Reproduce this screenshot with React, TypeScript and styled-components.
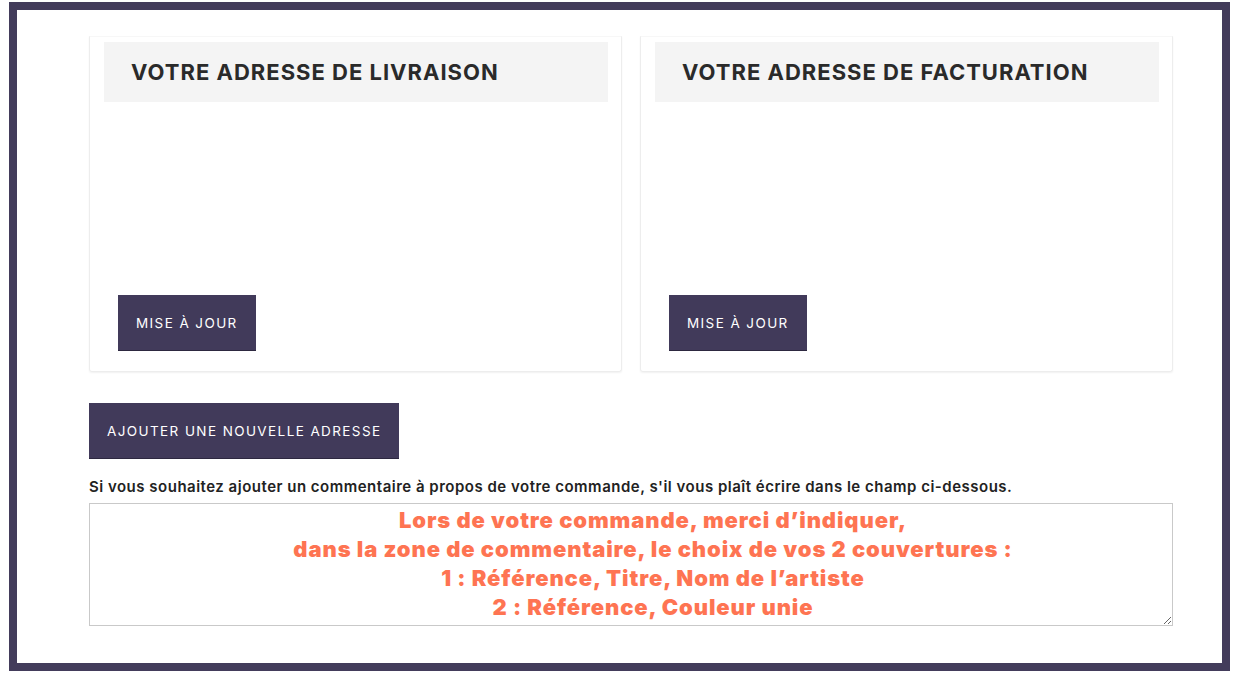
import React from 'react';
import styled, { createGlobalStyle } from 'styled-components';

const GlobalStyle = createGlobalStyle`
  html, body {
    margin: 0;
    padding: 0;
    background: #ffffff;
  }
  body {
    font-family: 'Inter', 'Liberation Sans', sans-serif;
  }
`;

const Frame = styled.div`
  box-sizing: border-box;
  width: 1221px;
  height: 669px;
  margin: 2px 0 0 9px;
  border: 8px solid #433c5b;
  background: #ffffff;
  padding: 26px 0 0 72px;
`;

const Content = styled.div`
  width: 1084px;
  display: flex;
  flex-direction: column;
`;

const CardRow = styled.div`
  display: grid;
  grid-template-columns: 1fr 1fr;
  gap: 18px;
`;

const Card = styled.section`
  box-sizing: border-box;
  height: 336px;
  border: 1px solid #ededed;
  border-top-color: #f7f7f7;
  border-radius: 0 0 3px 3px;
  box-shadow: 0 1px 2px rgba(0, 0, 0, 0.06);
  padding: 5px 13px 0 14px;
  display: flex;
  flex-direction: column;
`;

const CardHeader = styled.div`
  height: 60px;
  background: #f4f4f4;
  display: flex;
  align-items: center;
  padding-left: 27px;
`;

const CardTitle = styled.h2`
  margin: 0;
  font-family: 'Inter', 'Liberation Sans', sans-serif;
  font-size: 22px;
  font-weight: 700;
  letter-spacing: 1px;
  color: #2a2a2a;
`;

const CardBody = styled.div`
  flex: 1;
  padding: 193px 14px 0;
`;

const DarkButton = styled.button`
  box-sizing: border-box;
  height: 56px;
  padding: 0 18px;
  background: #413a5a;
  border: none;
  border-bottom: 1px solid #2d2840;
  color: #ffffff;
  font-family: 'Inter', 'Liberation Sans', sans-serif;
  font-size: 13.5px;
  font-weight: 400;
  letter-spacing: 1.4px;
  text-transform: uppercase;
  cursor: pointer;
  align-self: flex-start;
`;

const AddButton = styled(DarkButton)`
  margin-top: 31px;
`;

const Hint = styled.p`
  margin: 18px 0 6px;
  font-family: 'Inter', 'Liberation Sans', sans-serif;
  font-size: 15px;
  font-weight: 600;
  line-height: 20px;
  letter-spacing: 0.5px;
  color: #222222;
`;

const Comment = styled.textarea`
  box-sizing: border-box;
  width: 1084px;
  height: 123px;
  margin: 0;
  padding: 2px 0 0 44px;
  border: 1px solid #c9c9c9;
  font-family: 'Inter', 'Liberation Sans', sans-serif;
  font-size: 22px;
  font-weight: 900;
  line-height: 29px;
  letter-spacing: 0.9px;
  color: #fe7452;
  text-align: center;
  overflow: hidden;
  resize: vertical;
  outline: none;
`;

const commentText =
  'Lors de votre commande, merci d\u2019indiquer,\n' +
  'dans la zone de commentaire, le choix de vos 2 couvertures :\n' +
  '1 : Référence, Titre, Nom de l\u2019artiste\n' +
  '2 : Référence, Couleur unie';

const addresses = ['Votre adresse de livraison', 'Votre adresse de facturation'];

export default function App() {
  return (
    <>
      <GlobalStyle />
      <Frame>
        <Content>
          <CardRow>
            {addresses.map((title) => (
              <Card key={title}>
                <CardHeader>
                  <CardTitle>{title.toUpperCase()}</CardTitle>
                </CardHeader>
                <CardBody>
                  <DarkButton>Mise à jour</DarkButton>
                </CardBody>
              </Card>
            ))}
          </CardRow>
          <AddButton>Ajouter une nouvelle adresse</AddButton>
          <Hint>
            Si vous souhaitez ajouter un commentaire à propos de votre commande, s'il vous plaît écrire dans le
            champ ci-dessous.
          </Hint>
          <Comment readOnly defaultValue={commentText} />
        </Content>
      </Frame>
    </>
  );
}
